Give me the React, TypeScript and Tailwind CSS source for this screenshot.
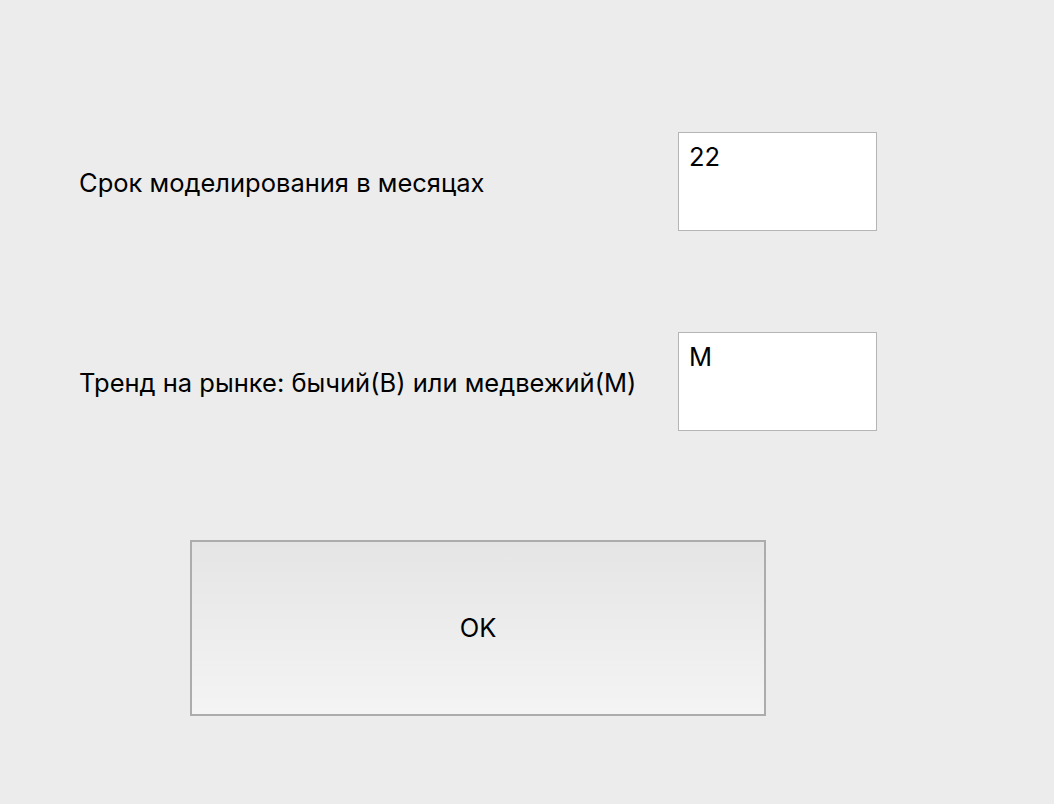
export default function App() {
  return (
    <div className="min-h-screen w-full bg-[#ececec] text-black [font-family:Inter,'Liberation_Sans',Arial,sans-serif]">
      <div className="flex flex-col pt-[132px]">
        <div className="flex items-center">
          <div className="w-[678px] pl-[79px] pt-[4px] text-[25.5px]">Срок моделирования в месяцах</div>
          <div className="h-[99px] w-[199px] border border-[#b5b5b5] bg-white px-[10px] pt-[9px] text-[25.5px] leading-[30px]">
            22
          </div>
        </div>
        <div className="mt-[101px] flex items-center">
          <div className="w-[678px] pl-[79px] pt-[4px] text-[25.5px]">Тренд на рынке: бычий(B) или медвежий(M)</div>
          <div className="h-[99px] w-[199px] border border-[#b5b5b5] bg-white px-[10px] pt-[9px] text-[25.5px] leading-[30px]">
            M
          </div>
        </div>
        <div className="mt-[109px] pl-[190px]">
          <button className="flex h-[176px] w-[576px] items-center justify-center border-2 border-[#acacac] bg-gradient-to-b from-[#e5e5e5] to-[#f4f4f4] text-[25.5px]">
            OK
          </button>
        </div>
      </div>
    </div>
  );
}
